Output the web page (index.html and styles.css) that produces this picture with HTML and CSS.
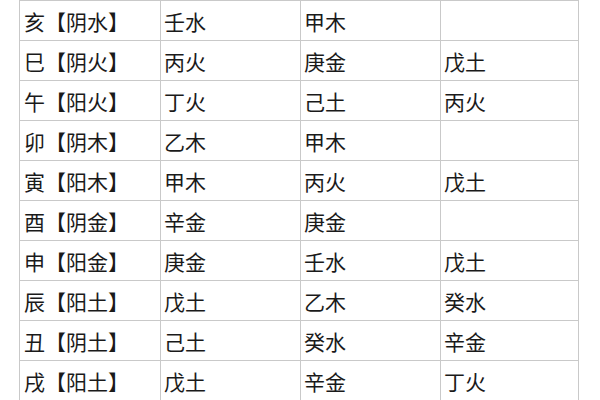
FILE: index.html
```html
<!DOCTYPE html>
<html lang="zh-CN">
<head>
<meta charset="utf-8">
<link rel="stylesheet" href="styles.css">
</head>
<body>
<table class="grid">
  <colgroup>
    <col class="c1"><col class="c2"><col class="c3"><col class="c4">
  </colgroup>
  <tr><td class="first">亥【阴水】</td><td>壬水</td><td>甲木</td><td></td></tr>
  <tr><td class="first">巳【阴火】</td><td>丙火</td><td>庚金</td><td>戊土</td></tr>
  <tr><td class="first">午【阳火】</td><td>丁火</td><td>己土</td><td>丙火</td></tr>
  <tr><td class="first">卯【阴木】</td><td>乙木</td><td>甲木</td><td></td></tr>
  <tr><td class="first">寅【阳木】</td><td>甲木</td><td>丙火</td><td>戊土</td></tr>
  <tr><td class="first">酉【阴金】</td><td>辛金</td><td>庚金</td><td></td></tr>
  <tr><td class="first">申【阳金】</td><td>庚金</td><td>壬水</td><td>戊土</td></tr>
  <tr><td class="first">辰【阳土】</td><td>戊土</td><td>乙木</td><td>癸水</td></tr>
  <tr><td class="first">丑【阴土】</td><td>己土</td><td>癸水</td><td>辛金</td></tr>
  <tr><td class="first">戌【阳土】</td><td>戊土</td><td>辛金</td><td>丁火</td></tr>
</table>
</body>
</html>
```
FILE: styles.css
```css
html, body {
  margin: 0;
  padding: 0;
  background: #ffffff;
}
body {
  width: 600px;
  height: 400px;
  overflow: hidden;
  font-family: "Noto Sans CJK SC", "Noto Sans", sans-serif;
}
.grid {
  margin-left: 19px;
  border-collapse: collapse;
  table-layout: fixed;
  width: 559px;
}
.c1 { width: 141px; }
.c2 { width: 140px; }
.c3 { width: 140px; }
.c4 { width: 138px; }
.grid td {
  border: 1px solid #c9c9c9;
  height: 40px;
  padding: 1px 0 0 3px;
  box-sizing: border-box;
  font-size: 21px;
  line-height: 38px;
  color: #1a1a1a;
  white-space: nowrap;
  vertical-align: middle;
}
.grid td.first {
  padding-left: 4px;
}
```
